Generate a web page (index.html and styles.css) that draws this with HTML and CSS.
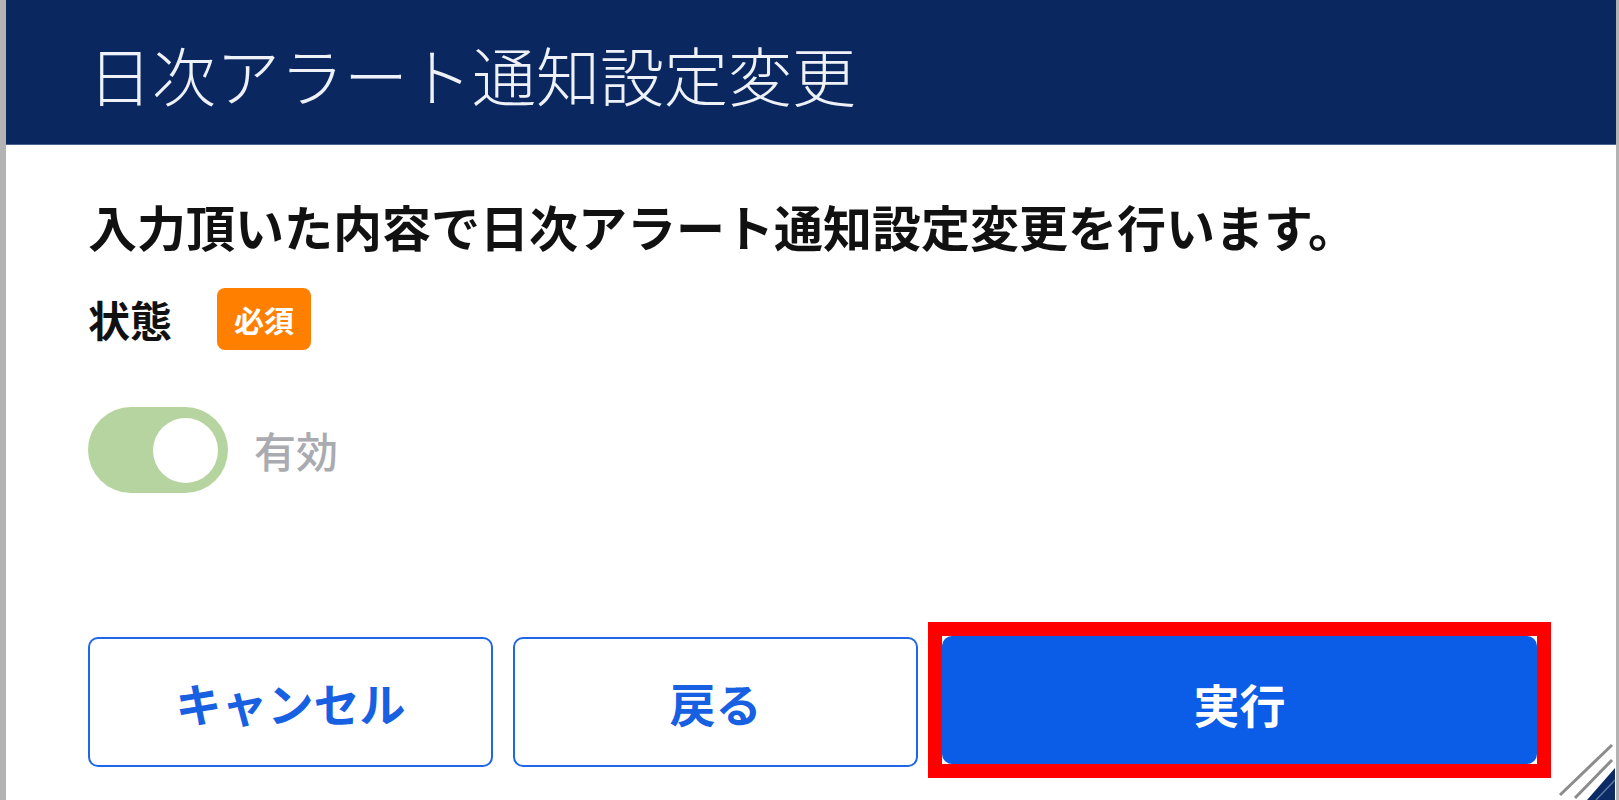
FILE: index.html
```html
<!doctype html>
<html>
<head>
    <meta charset="utf-8">
    <title>日次アラート通知設定変更</title>
    <link rel="stylesheet" href="styles.css">
</head>
<body>
    <div class="dialog">
        <div class="dialog-title">日次アラート通知設定変更</div>
        <div class="dialog-body">
            <p class="lead">入力頂いた内容で日次アラート通知設定変更を行います。</p>
            <div class="field-label">
                <span class="label-text">状態</span>
                <span class="required">必須</span>
            </div>
            <div class="switch-row">
                <span class="switch"><span class="knob"></span></span>
                <span class="switch-text">有効</span>
            </div>
        </div>
        <div class="dialog-footer">
            <button class="btn btn-outline btn-cancel">キャンセル</button>
            <button class="btn btn-outline btn-back">戻る</button>
            <button class="btn btn-primary">実行</button>
        </div>
        <svg class="grip" width="60" height="58" viewBox="0 0 60 58">
            <line x1="4" y1="53" x2="56" y2="3" stroke="#8c8c8c" stroke-width="3"/>
            <line x1="19" y1="56" x2="56" y2="18" stroke="#8c8c8c" stroke-width="3"/>
            <polygon points="31,58 59,58 59,26" fill="#0c2a63"/>
            <line x1="40" y1="58" x2="59" y2="38" stroke="#5d79a8" stroke-width="1.5"/>
        </svg>
    </div>
</body>
</html>
```

FILE: styles.css
```css
*{margin:0; padding:0; box-sizing:border-box;}

body{
    background:#b3b3b3;
    font-family:"Noto Sans CJK JP", sans-serif;
}
.dialog{
    position:relative;
    display:flex;
    flex-direction:column;
    width:1610px;
    height:800px;
    margin-left:6px;
    background:#fff;
}
.dialog-title{
    height:145px;
    padding-left:82px;
    line-height:146px;
    font-size:64px;
    font-weight:300;
    color:#eef1f7;
    background:#0a2760;
    border-bottom:1px solid #4a6290;
    white-space:nowrap;
}
.dialog-body{
    padding:56px 79px 0 82px;
}
.lead{
    font-size:49px;
    line-height:49px;
    font-weight:bold;
    color:#111;
}
.field-label{
    display:flex;
    align-items:center;
    height:62px;
    margin-top:38px;
}
.label-text{
    font-size:42px;
    line-height:42px;
    font-weight:bold;
    color:#111;
}
.required{
    margin-left:45px;
    height:62px;
    padding:0 17px;
    line-height:62px;
    font-size:30px;
    font-weight:bold;
    color:#fff;
    background:#ff8000;
    border-radius:8px;
}
.switch-row{
    display:flex;
    align-items:center;
    margin-top:57px;
}
.switch{
    display:flex;
    align-items:center;
    justify-content:flex-end;
    width:140px;
    height:86px;
    padding-right:10px;
    background:#b6d49f;
    border-radius:43px;
}
.knob{
    width:65px;
    height:65px;
    background:#fff;
    border-radius:50%;
}
.switch-text{
    margin-left:26px;
    font-size:42px;
    line-height:42px;
    font-weight:500;
    color:#a9abb1;
}
.dialog-footer{
    display:flex;
    align-items:flex-start;
    margin-top:auto;
    padding:0 79px 33px 82px;
}
.btn{
    font-family:"Noto Sans CJK JP", sans-serif;
    font-size:46px;
    font-weight:bold;
    border-radius:10px;
    cursor:pointer;
}
.btn-outline{
    margin-top:1px;
    width:405px;
    height:130px;
    color:#1760e2;
    background:#fff;
    border:2px solid #1f66e8;
}
.btn-back{
    margin-left:20px;
}
.btn-primary{
    position:relative;
    flex:1;
    margin-left:24px;
    height:128px;
    padding-top:5px;
    color:#fff;
    background:#0b5ce6;
    border:none;
}
/* 赤枠（注記） */
.btn-primary:after{
    content:"";
    position:absolute;
    top:-14px;
    left:-14px;
    right:-14px;
    bottom:-14px;
    border:14px solid #ff0000;
}
.grip{
    position:absolute;
    right:0;
    bottom:0;
}
```
